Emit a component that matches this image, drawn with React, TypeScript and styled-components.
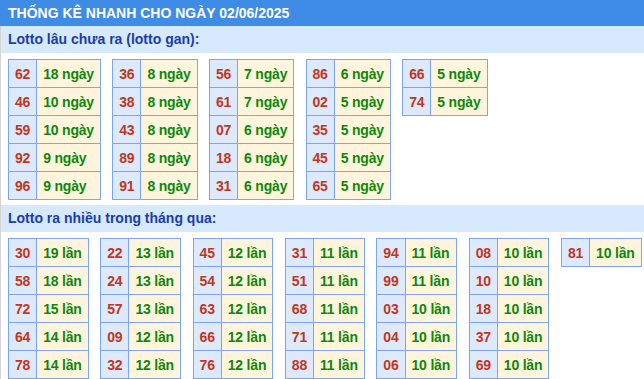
import React from "react";
import styled, { createGlobalStyle } from "styled-components";

const GlobalStyle = createGlobalStyle`
  html, body { margin: 0; padding: 0; background: #ffffff; }
  body { font-family: "Liberation Sans", Arial, sans-serif; }
`;

const Page = styled.div`
  width: 644px;
  font-family: "Liberation Sans", Arial, sans-serif;
`;

const Title = styled.div`
  height: 26px;
  line-height: 26px;
  padding: 0 8px;
  background: #3e8ce6;
  color: #ffffff;
  font-size: 14px;
  font-weight: bold;
`;

const Body = styled.div`
  border-left: 1px solid #d4d4d4;
  display: flex;
  flex-direction: column;
`;

const SectionHead = styled.div`
  height: 27px;
  line-height: 27px;
  padding: 0 7px;
  background: #d6e9fd;
  color: #1b3da8;
  font-size: 14px;
  font-weight: bold;
`;

const TableRow = styled.div<{ $gap: number }>`
  display: flex;
  align-items: flex-start;
  gap: ${(p) => p.$gap}px;
  padding: 6px 7px 5px;
`;

const Table = styled.table`
  border-collapse: separate;
  border-spacing: 0;
  border-top: 1px solid #7ea6ee;
  border-left: 1px solid #7ea6ee;
  font-size: 14px;
  font-weight: bold;
  letter-spacing: -0.2px;
`;

const Cell = styled.td<{ $kind: "num" | "val" }>`
  height: 27px;
  padding: 0 6px;
  border-right: 1px solid #7ea6ee;
  border-bottom: 1px solid #7ea6ee;
  text-align: ${(p) => (p.$kind === "num" ? "center" : "left")};
  white-space: nowrap;
  vertical-align: middle;
  background: ${(p) => (p.$kind === "num" ? "#dde9fc" : "#fff5dd")};
  color: ${(p) => (p.$kind === "num" ? "#c0381e" : "#0d880d")};
`;

type Item = [string, string];

const gan: Item[][] = [
  [["62", "18 ngày"], ["46", "10 ngày"], ["59", "10 ngày"], ["92", "9 ngày"], ["96", "9 ngày"]],
  [["36", "8 ngày"], ["38", "8 ngày"], ["43", "8 ngày"], ["89", "8 ngày"], ["91", "8 ngày"]],
  [["56", "7 ngày"], ["61", "7 ngày"], ["07", "6 ngày"], ["18", "6 ngày"], ["31", "6 ngày"]],
  [["86", "6 ngày"], ["02", "5 ngày"], ["35", "5 ngày"], ["45", "5 ngày"], ["65", "5 ngày"]],
  [["66", "5 ngày"], ["74", "5 ngày"]],
];

const nhieu: Item[][] = [
  [["30", "19 lần"], ["58", "18 lần"], ["72", "15 lần"], ["64", "14 lần"], ["78", "14 lần"]],
  [["22", "13 lần"], ["24", "13 lần"], ["57", "13 lần"], ["09", "12 lần"], ["32", "12 lần"]],
  [["45", "12 lần"], ["54", "12 lần"], ["63", "12 lần"], ["66", "12 lần"], ["76", "12 lần"]],
  [["31", "11 lần"], ["51", "11 lần"], ["68", "11 lần"], ["71", "11 lần"], ["88", "11 lần"]],
  [["94", "11 lần"], ["99", "11 lần"], ["03", "10 lần"], ["04", "10 lần"], ["06", "10 lần"]],
  [["08", "10 lần"], ["10", "10 lần"], ["18", "10 lần"], ["37", "10 lần"], ["69", "10 lần"]],
  [["81", "10 lần"]],
];

const StatTable = ({ rows }: { rows: Item[] }) => (
  <Table>
    <tbody>
      {rows.map(([n, v], i) => (
        <tr key={i}>
          <Cell $kind="num">{n}</Cell>
          <Cell $kind="val">{v}</Cell>
        </tr>
      ))}
    </tbody>
  </Table>
);

export default function App() {
  return (
    <Page>
      <GlobalStyle />
      <Title>THỐNG KÊ NHANH CHO NGÀY 02/06/2025</Title>
      <Body>
        <SectionHead>Lotto lâu chưa ra (lotto gan):</SectionHead>
        <TableRow $gap={11.3}>
          {gan.map((t, i) => (
            <StatTable key={i} rows={t} />
          ))}
        </TableRow>
        <SectionHead>Lotto ra nhiều trong tháng qua:</SectionHead>
        <TableRow $gap={11.6}>
          {nhieu.map((t, i) => (
            <StatTable key={i} rows={t} />
          ))}
        </TableRow>
      </Body>
    </Page>
  );
}
